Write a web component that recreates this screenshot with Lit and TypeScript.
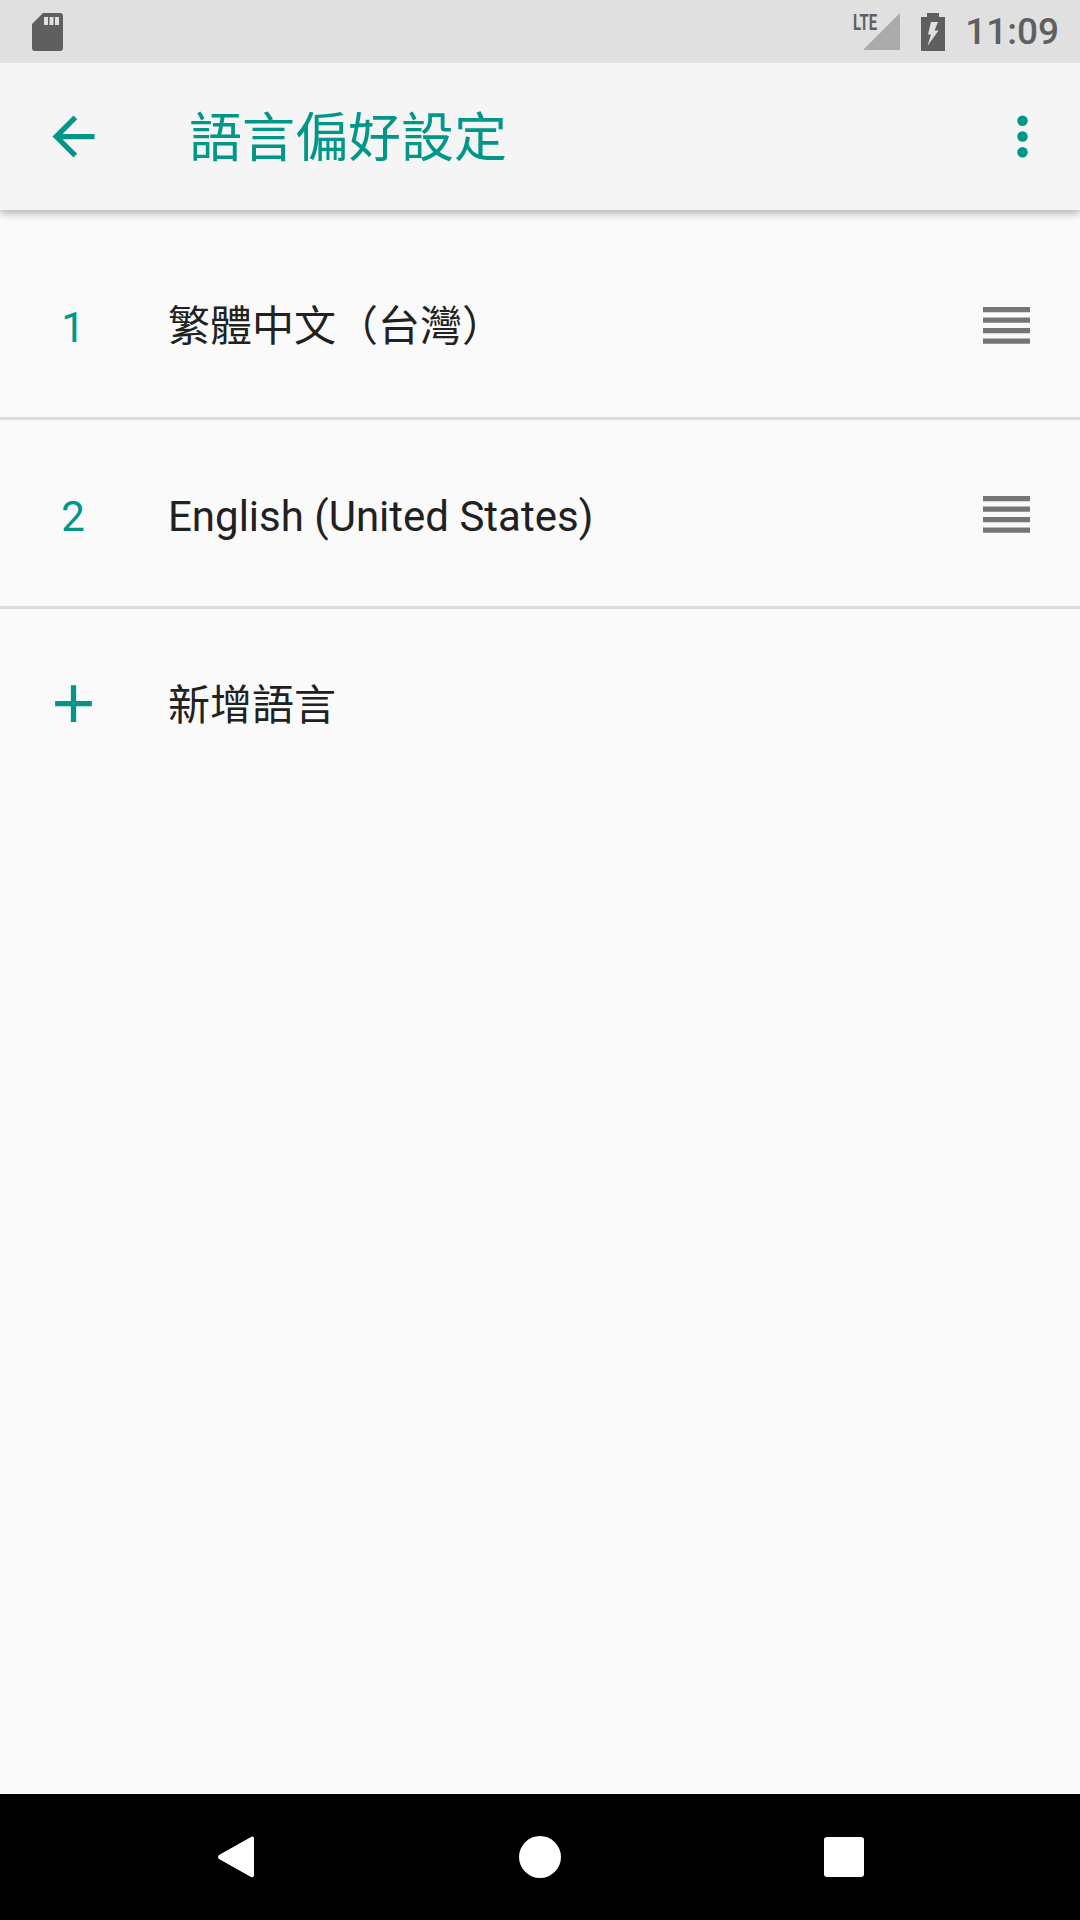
import { LitElement, html, css, svg } from 'lit';
import { customElement, property } from 'lit/decorators.js';

const arrowBack = svg`<path d="M20 11H7.83l5.59-5.59L12 4l-8 8 8 8 1.41-1.41L7.83 13H20v-2z"/>`;
const moreVert = svg`<circle cx="12" cy="6" r="2"/><circle cx="12" cy="12" r="2"/><circle cx="12" cy="18" r="2"/>`;
const add = svg`<path d="M19 13h-6v6h-2v-6H5v-2h6V5h2v6h6v2z"/>`;

interface Language {
  rank: number;
  name: string;
  latin?: boolean;
}

@customElement('app-root')
export class AppRoot extends LitElement {
  @property({ type: Array }) languages: Language[] = [
    { rank: 1, name: '繁體中文（台灣）' },
    { rank: 2, name: 'English (United States)', latin: true },
  ];

  static styles = css`
    :host {
      background-color: #fafafa;
      display: flex;
      flex-direction: column;
      font-family: Roboto, 'Noto Sans CJK TC', sans-serif;
      height: 1920px;
      width: 1080px;
    }

    .status {
      align-items: center;
      background-color: #e0e0e0;
      color: #5f5f5f;
      display: flex;
      flex: none;
      height: 63px;
      padding: 0 21px 0 32px;
      position: relative;
      z-index: 2;
    }

    .sd {
      fill: #5f5f5f;
      height: 38px;
      width: 31px;
    }

    .spacer {
      flex-grow: 1;
    }

    .signal {
      height: 38px;
      position: relative;
      width: 47px;
    }

    .signal svg {
      fill: #ababab;
      height: 38px;
      width: 47px;
    }

    .lte {
      color: #5f5f5f;
      font-size: 22px;
      font-weight: 700;
      left: 0;
      line-height: 22px;
      position: absolute;
      top: -1px;
      transform: scaleX(0.68);
      transform-origin: left top;
    }

    .battery {
      fill: #5f5f5f;
      height: 38px;
      margin-left: 21px;
      width: 24px;
    }

    .time {
      font-size: 37px;
      font-weight: 500;
      margin-left: 20px;
    }

    .appbar {
      align-items: center;
      background-color: #f5f5f5;
      box-shadow: 0 3px 8px rgba(0, 0, 0, 0.3);
      color: #009688;
      display: flex;
      flex: none;
      height: 147px;
      padding: 0 26px 0 42px;
      position: relative;
      z-index: 1;
    }

    .icon {
      fill: #009688;
      flex: none;
      height: 63px;
      width: 63px;
    }

    .appbar h1 {
      flex-grow: 1;
      font-size: 53px;
      font-weight: 400;
      margin: 0 0 6px 84px;
    }

    .list {
      flex-grow: 1;
      padding-top: 21px;
    }

    .row {
      align-items: center;
      border-bottom: 3px solid #dedede;
      box-sizing: border-box;
      color: #212121;
      display: flex;
      font-size: 42px;
      height: 189px;
    }

    .row:last-child {
      border-bottom: none;
    }

    .lead {
      align-items: center;
      color: #009688;
      display: flex;
      flex: none;
      justify-content: center;
      padding-top: 6px;
      width: 146px;
    }

    .lead.glyph {
      padding-top: 0;
      width: 147px;
    }

    .label {
      flex-grow: 1;
      margin-left: 22px;
      padding-bottom: 3px;
    }

    .glyph + .label {
      margin-left: 21px;
      padding-bottom: 4px;
    }

    .label.latin {
      padding-bottom: 0;
      padding-top: 7px;
    }

    .handle {
      fill: #757575;
      flex: none;
      height: 37px;
      margin: 2px 50px 0 0;
      width: 47px;
    }

    .nav {
      align-items: center;
      background-color: #000000;
      display: flex;
      flex: none;
      height: 126px;
      padding: 0 84px;
    }

    .nav > div {
      display: flex;
      flex: 1;
      justify-content: center;
    }

    .nav svg {
      fill: #ffffff;
      height: 42px;
      width: 42px;
    }
  `;

  renderHandle() {
    return html`
      <svg class="handle" viewBox="0 0 47 37">
        <rect y="0" width="47" height="5.25" />
        <rect y="10.5" width="47" height="5.25" />
        <rect y="21" width="47" height="5.25" />
        <rect y="31.5" width="47" height="5.25" />
      </svg>
    `;
  }

  render() {
    return html`
      <div class="status">
        <svg class="sd" viewBox="0 0 31 38">
          <path fill-rule="evenodd" d="M11 0h17a3 3 0 0 1 3 3v32a3 3 0 0 1-3 3H3a3 3 0 0 1-3-3V11zM12 4v8h4V4zM17.5 4v8h4V4zM23 4v8h4V4z" />
        </svg>
        <div class="spacer"></div>
        <div class="signal">
          <svg viewBox="0 0 47 38"><path d="M47 0v37H10z" /></svg>
          <span class="lte">LTE</span>
        </div>
        <svg class="battery" viewBox="0 0 24 38">
          <path fill-rule="evenodd" d="M6 0h12v4h6v34H0V4h6zM10 9h7l-3.5 8.5h4L6.5 33 10 21.5H7z" />
        </svg>
        <span class="time">11:09</span>
      </div>

      <header class="appbar">
        <svg class="icon" viewBox="0 0 24 24">${arrowBack}</svg>
        <h1>語言偏好設定</h1>
        <svg class="icon" viewBox="0 0 24 24">${moreVert}</svg>
      </header>

      <div class="list">
        ${this.languages.map(language => html`
          <div class="row">
            <div class="lead">${language.rank}</div>
            <div class="label ${language.latin ? 'latin' : ''}">${language.name}</div>
            ${this.renderHandle()}
          </div>
        `)}
        <div class="row">
          <div class="lead glyph"><svg class="icon" viewBox="0 0 24 24">${add}</svg></div>
          <div class="label">新增語言</div>
        </div>
      </div>

      <div class="nav">
        <div><svg viewBox="-3 0 42 42"><path d="M35 0.5a2 2 0 0 1 1 2v37a2 2 0 0 1-3 1.5L1 23a2.6 2.6 0 0 1 0-4L33 1a2 2 0 0 1 2-0.5z" /></svg></div>
        <div><svg viewBox="0 0 42 42"><circle cx="21" cy="21" r="21" /></svg></div>
        <div><svg viewBox="0 0 42 42"><rect x="1" y="1" width="40" height="40" rx="3" /></svg></div>
      </div>
    `;
  }
}
